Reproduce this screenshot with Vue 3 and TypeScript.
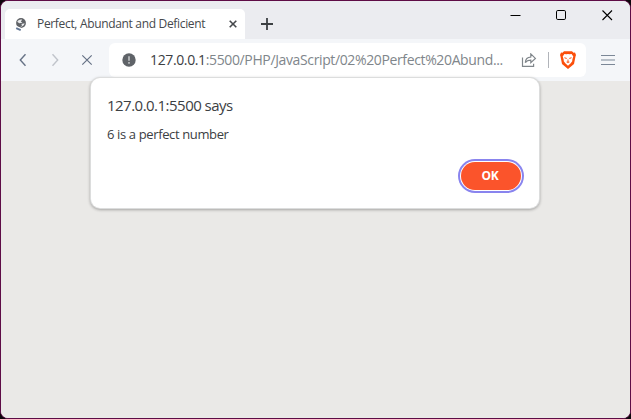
<script setup lang="ts">
const tabTitle = 'Perfect, Abundant and Deficient'
const host = '127.0.0.1'
const path = ':5500/PHP/JavaScript/02%20Perfect%20Abund...'
const origin = '127.0.0.1:5500'
const message = '6 is a perfect number'
</script>

<template>
  <div class="window">
    <header class="tabstrip">
      <div class="tab">
        <svg class="favicon" width="14" height="16" viewBox="0 0 14 16">
          <circle cx="7" cy="6" r="4.9" fill="#606367" />
          <path d="M3.2 4.8C4.5 2.5 7 2 8.2 2.8L6.8 4.5L8.5 5.8L5.2 6.2ZM7.2 7L10.6 6.3C10.2 8.7 8.4 9.7 6.4 9.7L8.2 8.2Z" fill="#e9eaec" />
          <path d="M2.1 10.5L6.8 12.6" stroke="#fff" stroke-width="3.4" />
          <path d="M2.2 11.2L6.7 13.1" stroke="#627694" stroke-width="1.9" />
        </svg>
        <span class="title">{{ tabTitle }}</span>
        <svg class="close-tab" width="8" height="8" viewBox="0 0 8 8">
          <path d="M.7.7L7.3 7.3M7.3.7L.7 7.3" stroke="#45484c" stroke-width="1.6" />
        </svg>
      </div>
      <svg class="new-tab" width="12" height="12" viewBox="0 0 12 12">
        <path d="M6 0V12M0 6H12" stroke="#3c4043" stroke-width="1.8" />
      </svg>
      <div class="controls">
        <svg width="11" height="11" viewBox="0 0 11 11"><path d="M.5 5.5H10.5" stroke="#000" /></svg>
        <svg width="11" height="11" viewBox="0 0 11 11"><rect x=".5" y=".5" width="9" height="9" rx="1.3" fill="none" stroke="#000" /></svg>
        <svg width="11" height="11" viewBox="0 0 11 11"><path d="M.5.5L10 10M10 .5L.5 10" stroke="#000" stroke-width="1.1" /></svg>
      </div>
    </header>

    <div class="toolbar">
      <nav class="nav">
        <svg width="12" height="14" viewBox="0 0 12 14"><path d="M8.5 1.3L3.3 7L8.5 12.7" fill="none" stroke="#667286" stroke-width="1.4" /></svg>
        <svg width="12" height="14" viewBox="0 0 12 14"><path d="M3.5 1.3L8.7 7L3.5 12.7" fill="none" stroke="#c0c4cb" stroke-width="1.4" /></svg>
        <svg width="12" height="14" viewBox="0 0 12 14"><path d="M1.3 2.3L10.7 11.7M10.7 2.3L1.3 11.7" stroke="#667286" stroke-width="1.2" /></svg>
      </nav>
      <div class="omnibox">
        <svg class="info" width="14" height="14" viewBox="0 0 14 14">
          <circle cx="7" cy="7" r="6.7" fill="#5f6368" />
          <path d="M7 3.3V7.8M7 9V10.7" stroke="#c9cbcd" stroke-width="1.5" />
        </svg>
        <span class="url"><span class="host">{{ host }}</span>{{ path }}</span>
        <svg class="share" width="16" height="14" viewBox="0 0 16 14">
          <path d="M1.5 4.6V13.3H12.6V10.8M4.3 9.8C4.5 6.3 6.6 4.2 9.8 4.2M4.3 9.8C5.6 7.7 7.2 7.1 9.8 7.1M9.8 4.6V.9L14.4 5.4L9.8 9.6V6.6" fill="none" stroke="#80868b" stroke-width="1.2" />
        </svg>
        <i class="divider"></i>
        <svg class="brave" width="16" height="18" viewBox="0 0 16 18">
          <path d="M4 .2H12L13.5 1.7L15 1.5L16 4L15.5 5.5L14 13L8 18L2 13L.5 5.5L0 4L1 1.5L2.5 1.7Z" fill="#fb4f0c" />
          <path d="M4.4 3L6.4 3.3L8 3L9.6 3.3L11.6 3L13.3 5.5L12.4 8.3L12.2 10.3L10.7 12.3L8 14.7L5.3 12.3L3.8 10.3L3.6 8.3L2.7 5.5Z" fill="#fff" />
          <path d="M4.2 6L6.8 6.9V7.9L4.8 7.5ZM11.8 6L9.2 6.9V7.9L11.2 7.5ZM7.4 8.5H8.6L8.5 10.2L9.9 11L8 12.3L6.1 11L7.5 10.2Z" fill="#fb6a36" />
        </svg>
      </div>
      <svg class="menu" width="14" height="12" viewBox="0 0 14 12">
        <path d="M0 1.5H14M0 6H14M0 10.5H14" stroke="#7b8797" stroke-width="1.2" />
      </svg>
    </div>

    <main class="page"></main>

    <section class="dialog">
      <h1>{{ origin }} says</h1>
      <p>{{ message }}</p>
      <button type="button">OK</button>
    </section>
  </div>
</template>

<style>
body { background: #0d060c; }
</style>

<style scoped>
.window {
  position: relative;
  box-sizing: border-box;
  width: 631px;
  height: 419px;
  border: 1px solid #5e0c46;
  border-radius: 8px;
  overflow: hidden;
  display: flex;
  flex-direction: column;
  background: #eae9e7;
  font-family: "Open Sans", "Noto Sans", sans-serif;
}
svg { display: block; flex: none; }
.tabstrip {
  height: 38px;
  flex: none;
  display: flex;
  align-items: flex-start;
  background: #ebecf0;
}
.tab {
  box-sizing: border-box;
  width: 240px;
  height: 30px;
  margin: 8px 0 0 4px;
  padding: 0 8px 0 9px;
  border-radius: 5px 5px 0 0;
  background: #fff;
  display: flex;
  align-items: center;
}
.favicon { margin-top: 2px; }
.title { margin-left: 9px; font-size: 12px; line-height: 16px; color: #45484c; white-space: nowrap; letter-spacing: -.33px; }
.close-tab { margin-left: auto; }
.new-tab { margin: 17px 0 0 16px; }
.controls { display: flex; gap: 35px; margin: 9px 17px 0 auto; }
.toolbar {
  height: 42px;
  flex: none;
  display: flex;
  align-items: center;
  background: #f4f6f9;
}
.nav { display: flex; gap: 20px; margin-left: 16px; }
.omnibox {
  box-sizing: border-box;
  width: 477px;
  height: 34px;
  margin: 0 0 0 16px;
  padding: 0 10px 0 13px;
  border-radius: 6px;
  background: #fff;
  display: flex;
  align-items: center;
}
.url { margin-left: 14px; font-size: 14px; line-height: 20px; color: #80868b; white-space: nowrap; letter-spacing: -.37px; }
.host { color: #3c4043; }
.share { margin-left: auto; }
.divider { width: 1px; height: 16px; margin: 0 11px 0 11px; background: #b1b4ba; }
.menu { margin-left: 15px; }
.page { flex: 1; background: #eae9e7; }
.dialog {
  position: absolute;
  box-sizing: border-box;
  left: 90px;
  top: 77px;
  width: 448px;
  height: 130px;
  padding: 17px 17px 17px 16px;
  border-radius: 9px;
  background: #fff;
  box-shadow: 0 0 0 1px #dcdddd, 0 1px 3px 1px rgba(0, 0, 0, .3);
  display: flex;
  flex-direction: column;
  color: #3c4043;
}
h1 { margin: 0; font-size: 15px; line-height: 20px; font-weight: 400; letter-spacing: -.52px; }
p { margin: 10px 0 0; font-size: 13px; line-height: 18px; letter-spacing: -.37px; }
button {
  width: 60px;
  height: 28px;
  margin: auto 1px 1px auto;
  padding: 0 2px 0 0;
  border: 0;
  border-radius: 14px;
  background: #fb542b;
  color: #fff;
  font: 700 12px/28px "Open Sans", "Noto Sans", sans-serif;
  letter-spacing: -.3px;
  box-shadow: 0 0 0 1px #fff, 0 0 0 3px #8984ee;
}
</style>
